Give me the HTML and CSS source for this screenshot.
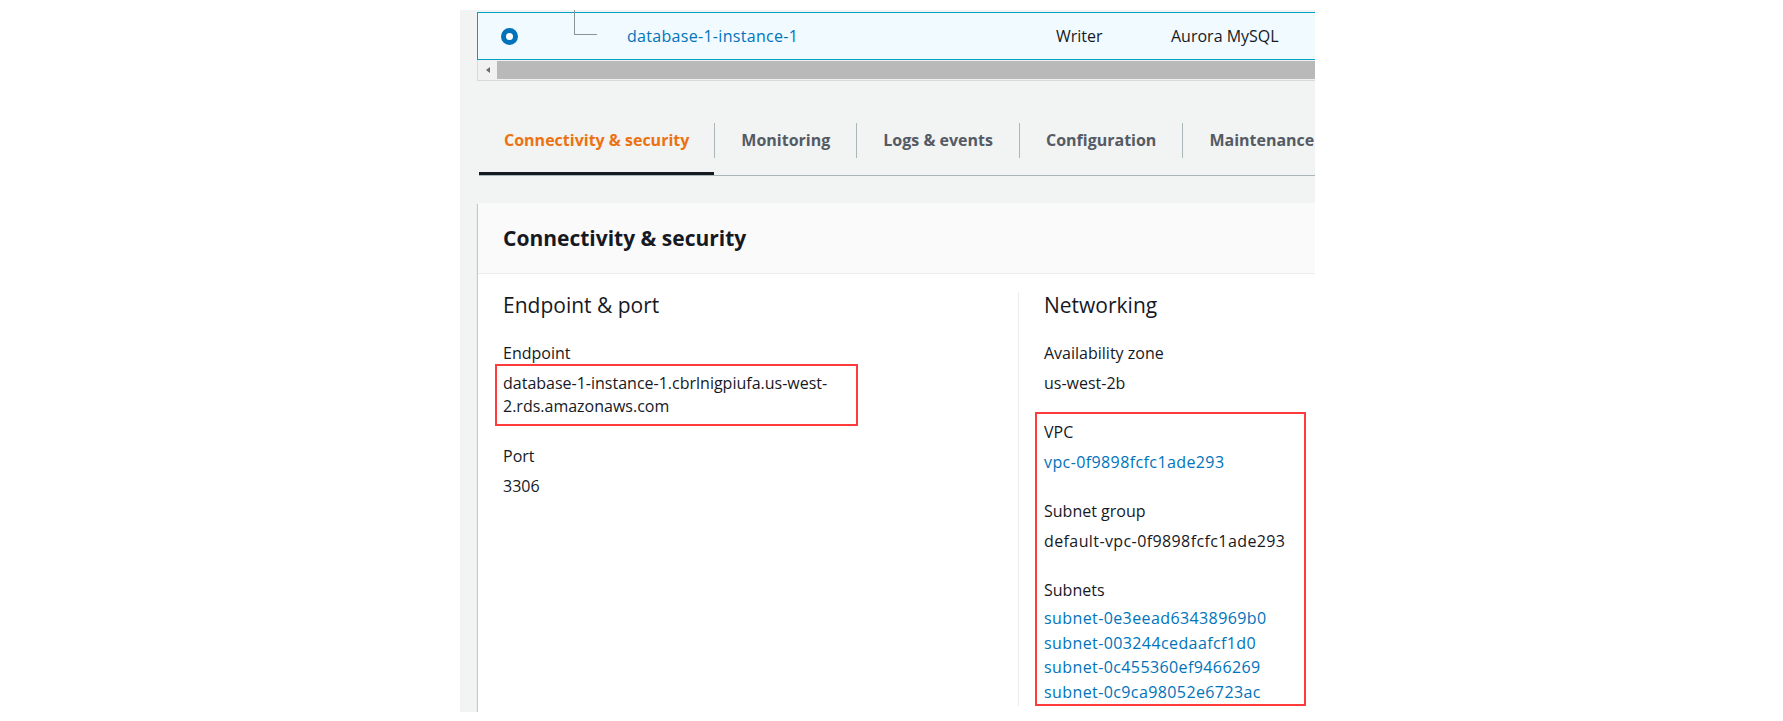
FILE: index.html
```html
<!DOCTYPE html>
<html lang="en">
<head>
<meta charset="utf-8">
<title>Connectivity &amp; security</title>
<link rel="stylesheet" href="styles.css">
</head>
<body>
<div class="frame">
  <div class="table">
    <div class="row">
      <div class="cell c-radio"><span class="radio"></span></div>
      <div class="cell c-tree"><span class="branch"></span></div>
      <div class="cell c-name"><a class="link" href="#">database-1-instance-1</a></div>
      <div class="cell c-role">Writer</div>
      <div class="cell c-engine">Aurora MySQL</div>
    </div>
    <div class="hscroll"><span class="arrow"><span class="tri"></span></span><span class="thumb"></span></div>
  </div>

  <div class="tabs">
    <div class="tab active"><span class="tab-label">Connectivity &amp; security</span></div>
    <div class="tab"><span class="tab-label sep">Monitoring</span></div>
    <div class="tab"><span class="tab-label sep">Logs &amp; events</span></div>
    <div class="tab"><span class="tab-label sep">Configuration</span></div>
    <div class="tab"><span class="tab-label sep last">Maintenance</span></div>
  </div>

  <div class="card">
    <div class="card-header"><h2 class="card-title">Connectivity &amp; security</h2></div>
    <div class="card-body">
      <div class="col col-left">
        <h3 class="col-title">Endpoint &amp; port</h3>
        <div class="group">
          <div class="label">Endpoint</div>
          <div class="value endpoint">database-1-instance-1.cbrlnigpiufa.us-west-<br>2.rds.amazonaws.com</div>
        </div>
        <div class="group">
          <div class="label">Port</div>
          <div class="value">3306</div>
        </div>
      </div>
      <div class="col col-right">
        <h3 class="col-title">Networking</h3>
        <div class="group">
          <div class="label">Availability zone</div>
          <div class="value">us-west-2b</div>
        </div>
        <div class="hl">
          <div class="group">
            <div class="label">VPC</div>
            <div class="value"><a class="link" href="#">vpc-0f9898fcfc1ade293</a></div>
          </div>
          <div class="group">
            <div class="label">Subnet group</div>
            <div class="value">default-vpc-0f9898fcfc1ade293</div>
          </div>
          <div class="group last">
            <div class="label">Subnets</div>
            <div class="value subnets">
              <a class="link" href="#">subnet-0e3eead63438969b0</a>
              <a class="link" href="#">subnet-003244cedaafcf1d0</a>
              <a class="link" href="#">subnet-0c455360ef9466269</a>
              <a class="link" href="#">subnet-0c9ca98052e6723ac</a>
            </div>
          </div>
        </div>
      </div>
    </div>
  </div>
</div>
</body>
</html>
```
FILE: styles.css
```css
* { box-sizing: border-box; }

html, body {
  margin: 0;
  padding: 0;
  background: #ffffff;
}

body {
  font-family: "Open Sans", "Noto Sans", sans-serif;
  font-size: 16px;
  color: #16191f;
}

.frame {
  margin: 10px 0 0 460px;
  width: 855px;
  height: 702px;
  overflow: hidden;
  background: #f2f3f3;
}

/* table */
.table {
  margin: 2px 0 0 17px;
  width: 900px;
  background: #fff;
}

.row {
  display: flex;
  align-items: center;
  height: 48px;
  background: #f1faff;
  border: 1px solid #00a1c9;
  border-right: none;
}

.cell { flex: none; }
.c-radio { width: 96px; padding-left: 23px; display: flex; align-items: center; }
.radio {
  display: block;
  width: 17px;
  height: 17px;
  border-radius: 50%;
  border: 5.5px solid #0073bb;
  background: #fff;
}
.c-tree { width: 53px; align-self: flex-start; }
.branch {
  display: block;
  width: 23px;
  height: 26px;
  margin-top: -4px;
  border-left: 1px solid #879596;
  border-bottom: 1px solid #879596;
}
.c-name { width: 429px; letter-spacing: 0.3px; }
.c-role { width: 115px; color: #16191f; }
.c-engine { color: #16191f; }

.link {
  color: #0073bb;
  text-decoration: none;
}

.hscroll {
  display: flex;
  height: 21px;
  background: #f1f1f1;
  border-left: 1px solid #d5dbdb;
  border-bottom: 1px solid #d5dbdb;
}
.arrow {
  width: 19px;
  display: flex;
  align-items: center;
  justify-content: center;
}
.tri {
  width: 0;
  height: 0;
  border-right: 4px solid #6b6b6b;
  border-top: 3.5px solid transparent;
  border-bottom: 3.5px solid transparent;
}
.thumb {
  flex: 1;
  margin: 1px 0 1px;
  background: #b9b9b9;
}

/* tabs */
.tabs {
  display: flex;
  margin: 20px 0 0 19px;
  border-bottom: 1px solid #aab7b8;
  white-space: nowrap;
}
.tab {
  padding: 22px 0 14px;
  border-bottom: 3px solid transparent;
  font-weight: 700;
  color: #545b64;
}
.tab.active {
  border-bottom-color: #16191f;
  color: #ec7211;
}
.tab-label {
  display: block;
  line-height: 35px;
  padding: 0 25px;
}
.tab-label.sep {
  border-left: 1px solid #aab7b8;
  padding: 0 26px;
}
.tab-label.last {
  padding-right: 0;
}

/* card */
.card {
  margin: 27px 0 0 18px;
  width: 900px;
  background: #fff;
  box-shadow: 0 1px 1px 0 rgba(0,28,36,.3), 1px 1px 1px 0 rgba(0,28,36,.15), -1px 1px 1px 0 rgba(0,28,36,.15);
}
.card-header {
  height: 71px;
  display: flex;
  align-items: center;
  padding: 0 25px;
  background: #fafafa;
  border-bottom: 1px solid #eaeded;
}
.card-title {
  margin: 0;
  font-size: 21px;
  font-weight: 700;
  color: #16191f;
}
.card-body {
  display: flex;
  align-items: flex-start;
  padding: 18px 0 40px;
}
.col-left {
  width: 540px;
  padding-left: 25px;
}
.col-right {
  flex: 1;
  border-left: 1px solid #eaeded;
  padding-left: 25px;
}
.col-title {
  margin: 0 0 24px;
  font-size: 21px;
  font-weight: 400;
  line-height: 26px;
  color: #16191f;
}
.group { margin-bottom: 27px; }
.group.last { margin-bottom: 0; }
.label {
  line-height: 22px;
  margin-bottom: 8px;
  color: #16191f;
}
.value {
  line-height: 22px;
}
.endpoint {
  width: 347px;
  line-height: 23px;
  outline: 2px solid #ff3b3b;
  outline-offset: 6px;
}
.hl {
  width: 271px;
  margin: -9px 0 0 -9px;
  padding: 7px 7px 0;
  border: 2px solid #ff3b3b;
}
.hl .value { letter-spacing: 0.4px; }
.subnets {
  margin-top: -3px;
  line-height: 24.5px;
}
.subnets .link { display: block; }
```
